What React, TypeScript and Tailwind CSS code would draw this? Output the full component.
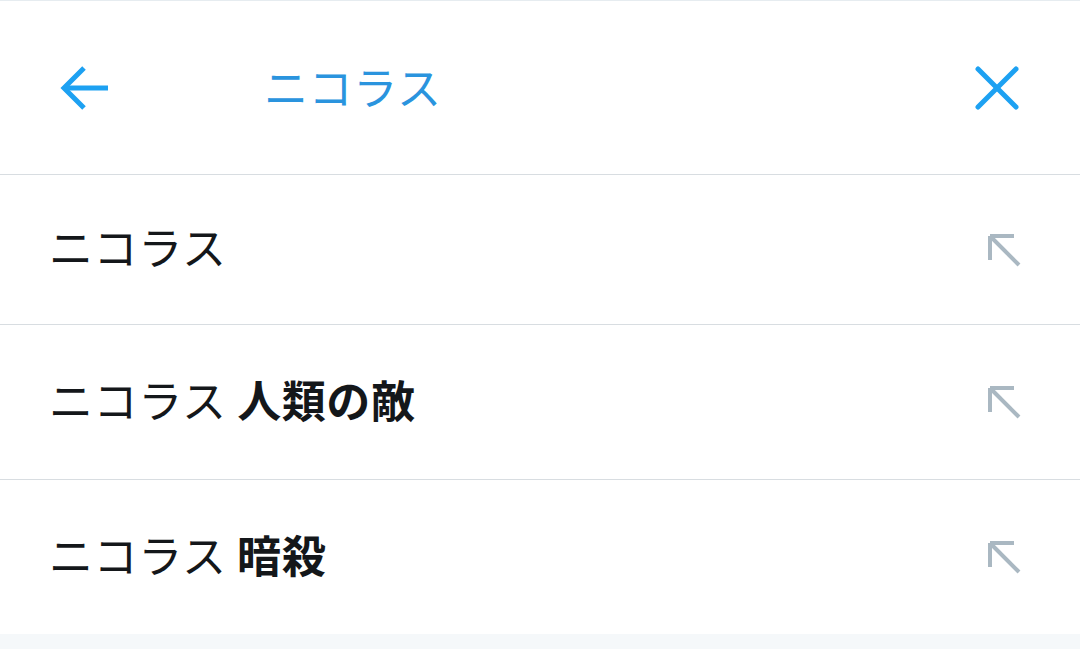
import React from "react";

const font = { fontFamily: '"Noto Sans CJK JP", "Noto Sans", sans-serif' };

function ArrowUpLeft() {
  return (
    <svg width="40" height="40" viewBox="0 0 40 40" fill="none" stroke="#aab8c2" strokeWidth="4" strokeLinecap="butt" strokeLinejoin="miter">
      <path d="M6 6 L30 6" />
      <path d="M6 6 L6 30" />
      <path d="M6 6 L35 35" />
    </svg>
  );
}

function Row({ light, bold, h }: { light: string; bold?: string; h: string }) {
  return (
    <div className={`flex items-center justify-between border-b border-[#d8dde1] pl-[49px] pr-[56px] ${h}`}>
      <div className="text-[44px] leading-none text-[#14171a] tracking-[0.6px] pb-[7px]" style={font}>
        <span className="font-normal">{light}</span>
        {bold ? <span className="font-bold"> {bold}</span> : null}
      </div>
      <ArrowUpLeft />
    </div>
  );
}

export default function App() {
  return (
    <div className="w-[1080px] h-[649px] bg-[#f5f8fa] overflow-hidden">
      <div className="bg-white border-t border-[#e6ecf0]">
        <div className="h-[174px] flex items-center border-b border-[#d8dde1] relative">
          <div className="w-[264px] pl-[58px] flex items-center">
            <svg width="52" height="52" viewBox="0 0 52 52" fill="none" stroke="#1da1f2" strokeWidth="5" strokeLinecap="butt" strokeLinejoin="miter">
              <path d="M50 26 L6 26" />
              <path d="M26 6 L6 26 L26 46" />
            </svg>
          </div>
          <div className="flex-1 text-[44px] leading-none text-[#2a94de] tracking-[0.6px] pb-[4px]" style={font}>
            ニコラス
          </div>
          <div className="pr-[60px] flex items-center">
            <svg width="46" height="46" viewBox="0 0 46 46" fill="none" stroke="#1da1f2" strokeWidth="5" strokeLinecap="round">
              <path d="M4 4 L42 42" />
              <path d="M42 4 L4 42" />
            </svg>
          </div>
        </div>
        <Row light="ニコラス" h="h-[150px]" />
        <Row light="ニコラス" bold="人類の敵" h="h-[155px]" />
        <div className="flex items-center justify-between pl-[49px] pr-[56px] h-[154px] bg-white">
          <div className="text-[44px] leading-none text-[#14171a] tracking-[0.6px] pb-[7px]" style={font}>
            <span className="font-normal">ニコラス</span>
            <span className="font-bold"> 暗殺</span>
          </div>
          <ArrowUpLeft />
        </div>
      </div>
    </div>
  );
}
